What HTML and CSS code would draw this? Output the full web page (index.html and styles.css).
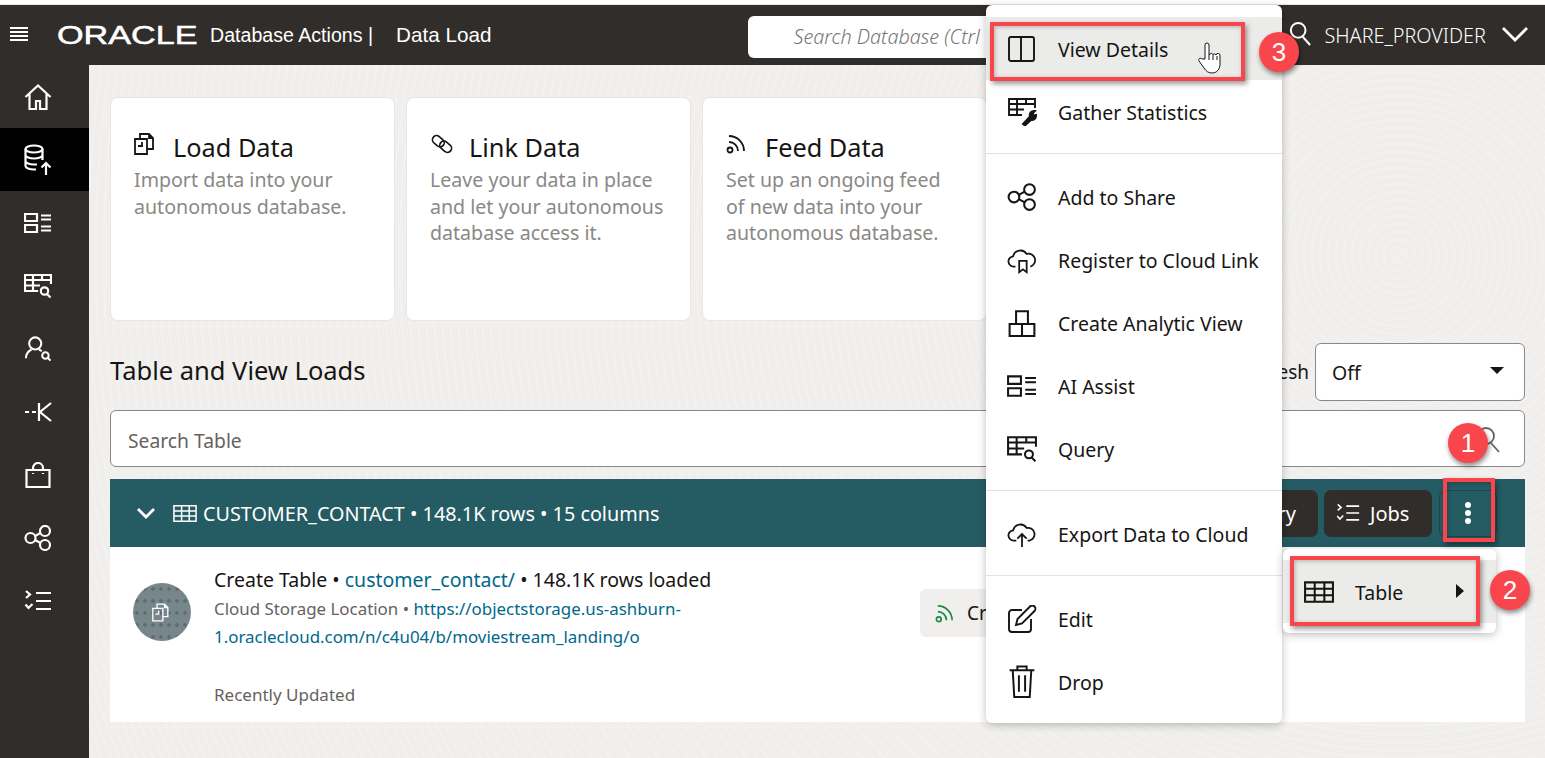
FILE: index.html
```html
<!DOCTYPE html>
<html>
	<head>
		<meta charset="utf-8">
		<title>Data Load</title>
		<link rel="stylesheet" href="styles.css">
	</head>
	<body>
	<svg class="defs" width="0" height="0">
		<symbol id="i-home" viewBox="0 0 28 28"><path d="M1.500 14 14 2.500 26.500 14M5.500 11v15h6.500v-8h4v8h6.500V11"/></symbol>
		<symbol id="i-dbup" viewBox="0 0 28 32"><ellipse cx="10" cy="5" rx="8.500" ry="3.500"/><path d="M1.500 5v17c0 2 4 3.500 8.500 3.500h2M18.500 5v11M1.500 11c0 2 4 3.500 8.500 3.500s8.500-1.500 8.500-3.500M1.500 17c0 2 4 3.500 8.500 3.500h3"/><path class="up" d="M22 31V19M17.500 23.500 22 19l4.500 4.500"/></symbol>
		<symbol id="i-cards" viewBox="0 0 28 20"><path d="M1 1h12v7H1zM1 12h12v7H1zM17 2.500h10M17 6.500h10M17 13.500h10M17 17.500h10"/></symbol>
		<symbol id="i-query" viewBox="0 0 28 24"><path d="M27 10V1H1v16h13M1 6h26M1 11.500h15M9 1v16M18 1v5"/><circle cx="20.500" cy="17" r="3.700"/><path d="m23 20 3.500 3.500"/></symbol>
		<symbol id="i-wrench" viewBox="0 0 28 28"><path d="M27 10V1H1v16h13M1 6h26M1 11.500h15M9 1v16M18 1v5"/><path class="solid" d="M15 26l7-7.500c-1-3 1-6 5-5.500l-2.500 2.500 1 2 2.500-.5c.5 3.500-2.500 5.500-5 5L17 27.500z"/></symbol>
		<symbol id="i-person" viewBox="0 0 28 28"><circle cx="11" cy="8" r="6.500"/><path d="M1 24c0-5 3-8 6-9.500M15 14.500c1 .5 2 1 3 2"/><circle cx="22" cy="21" r="3.500"/><path d="m24.500 23.500 3 3"/></symbol>
		<symbol id="i-data" viewBox="0 0 28 20"><path d="M1 10h4M8 10h4M15 1v18M27 1 16 10l11 9"/></symbol>
		<symbol id="i-bag" viewBox="0 0 26 26"><path d="M1.500 8h23v17h-23zM8 8V6a5 5 0 0 1 10 0v2M8 11v1M18 11v1"/></symbol>
		<symbol id="i-share" viewBox="0 0 28 26"><circle cx="6.500" cy="13" r="5"/><circle cx="21" cy="6" r="5"/><circle cx="21" cy="20" r="5"/><path d="m11 11 5.500-3M11 15l5.500 3"/></symbol>
		<symbol id="i-jobs" viewBox="0 0 28 22"><path d="m2 1 4 3.500L2 8M1.500 14.500 4.500 18l4-4M12 3h15M12 11h15M12 19h15"/></symbol>
		<symbol id="i-table" viewBox="0 0 28 20"><path d="M1 1h26v18H1zM1 7h26M1 13h26M10 1v18M19 1v18"/></symbol>
		<symbol id="i-panel" viewBox="0 0 28 28"><rect x="1" y="2" width="25" height="24" rx="2"/><path d="M13 2v24"/></symbol>
		<symbol id="i-cloudmark" viewBox="0 0 30 30"><path d="M8 22H6.500a5.500 5.500 0 0 1-1-11A8 8 0 0 1 20 8.500 6.500 6.500 0 0 1 24 22"/><path d="M12 16h8v12l-4-3-4 3z"/></symbol>
		<symbol id="i-cloudup" viewBox="0 0 30 30"><path d="M9 22H6.500a5.500 5.500 0 0 1-1-11A8 8 0 0 1 20 8.500 6.500 6.500 0 0 1 23 22h-2"/><path d="M15 29V15M10 20l5-5 5 5"/></symbol>
		<symbol id="i-blocks" viewBox="0 0 26 26"><path d="M1.500 14h23v11h-23zM13 14v11M7.500 2h11v12h-11z"/></symbol>
		<symbol id="i-edit" viewBox="0 0 28 28"><path d="M14 5H4a3 3 0 0 0-3 3v16a3 3 0 0 0 3 3h16a3 3 0 0 0 3-3V14"/><path d="M8 20l1.500-6L22 1.500a2.500 2.500 0 0 1 4.500 4.500L14 18.500z"/></symbol>
		<symbol id="i-trash" viewBox="0 0 26 32"><path d="M1 5h24M8.500 5V1.500h9V5M4 5l1.500 26h15L22 5M10 10v16M16 10v16"/></symbol>
		<symbol id="i-load" viewBox="0 0 24 22"><path d="M1 6h12v15H1zM6 6V1h9l4 4v11h-6M4 13h4V9M15 1v4h4"/></symbol>
		<symbol id="i-link" viewBox="0 0 24 24"><rect x="1" y="4.500" width="14" height="9" rx="4.500" transform="rotate(40 8 9)"/><rect x="9" y="10.500" width="14" height="9" rx="4.500" transform="rotate(40 16 15)"/></symbol>
		<symbol id="i-feed" viewBox="0 0 20 20"><circle cx="4" cy="16" r="2.500"/><path d="M3 8a9 9 0 0 1 9 9M3 2a15 15 0 0 1 15 15"/></symbol>
		<symbol id="i-search" viewBox="0 0 24 26"><circle cx="10" cy="9" r="8"/><path d="m15 16 8 9"/></symbol>
	</svg>

	<div class="strip"></div>
	<header class="topbar">
		<div class="burger"><i></i><i></i><i></i><i></i></div>
		<svg class="logo" width="141" height="26" viewBox="0 0 103 26" preserveAspectRatio="none"><text x="0" y="22">ORACLE</text></svg>
		<span class="app">Database Actions |</span>
		<span class="app page">Data Load</span>
		<div class="globalsearch">Search Database (Ctrl</div>
		<svg class="ico usericon"><use href="#i-search"/></svg>
		<span class="username">SHARE_PROVIDER</span>
		<svg class="userchev" width="26" height="16" viewBox="0 0 26 16"><path d="M1 2l12 12L25 2"/></svg>
	</header>

	<div class="main">
		<nav class="sidebar">
			<a><svg class="ico side-home"><use href="#i-home"/></svg></a>
			<a class="active"><svg class="ico side-db"><use href="#i-dbup"/></svg></a>
			<a><svg class="ico side-wide"><use href="#i-cards"/></svg></a>
			<a><svg class="ico side-wide"><use href="#i-query"/></svg></a>
			<a><svg class="ico side-wide"><use href="#i-person"/></svg></a>
			<a><svg class="ico side-wide"><use href="#i-data"/></svg></a>
			<a><svg class="ico side-bag"><use href="#i-bag"/></svg></a>
			<a><svg class="ico side-wide"><use href="#i-share"/></svg></a>
			<a><svg class="ico side-wide"><use href="#i-jobs"/></svg></a>
		</nav>

		<main class="content">
			<div class="cards">
				<div class="card">
					<div class="card-title"><svg class="ico card-ico"><use href="#i-load"/></svg>Load Data</div>
					<p>Import data into your<br>autonomous database.</p>
				</div>
				<div class="card">
					<div class="card-title"><svg class="ico card-ico"><use href="#i-link"/></svg>Link Data</div>
					<p>Leave your data in place<br>and let your autonomous<br>database access it.</p>
				</div>
				<div class="card">
					<div class="card-title"><svg class="ico card-ico feed"><use href="#i-feed"/></svg>Feed Data</div>
					<p>Set up an ongoing feed<br>of new data into your<br>autonomous database.</p>
				</div>
			</div>

			<div class="loads-head">
				<h2>Table and View Loads</h2>
				<span class="refresh-label">Auto Refresh</span>
				<div class="select">Off<b></b></div>
			</div>

			<div class="tablesearch">
				<span>Search Table</span>
				<svg class="ico"><use href="#i-search"/></svg>
			</div>

			<section class="load">
				<div class="load-head">
					<svg class="chev" width="20" height="12" viewBox="0 0 20 12"><path d="M2 2l8 8 8-8"/></svg>
					<svg class="ico load-table"><use href="#i-table"/></svg>
					<span class="load-name">CUSTOMER_CONTACT • 148.1K rows • 15 columns</span>
					<button class="dark query">Query</button>
					<button class="dark jobs"><svg class="ico"><use href="#i-jobs"/></svg>Jobs</button>
					<button class="kebab"><i></i><i></i><i></i></button>
				</div>
				<div class="load-body">
					<div class="avatar"><svg class="ico"><use href="#i-load"/></svg></div>
					<div class="load-text">
						<div class="line1">Create Table • <a>customer_contact/</a> • 148.1K rows loaded</div>
						<div class="line2">Cloud Storage Location • <a>https://objectstorage.us-ashburn-<br>1.oraclecloud.com/n/c4u04/b/moviestream_landing/o</a></div>
						<div class="line3">Recently Updated</div>
					</div>
					<div class="chip"><svg class="ico"><use href="#i-feed"/></svg>Create</div>
				</div>
			</section>
		</main>
	</div>

	<!-- popup menus and the numbered callouts sit over the page -->
	<div class="menu actions">
		<div class="item hover"><svg class="ico"><use href="#i-panel"/></svg>View Details</div>
		<div class="item"><svg class="ico"><use href="#i-wrench"/></svg>Gather Statistics</div>
		<hr>
		<div class="item"><svg class="ico"><use href="#i-share"/></svg>Add to Share</div>
		<div class="item"><svg class="ico"><use href="#i-cloudmark"/></svg>Register to Cloud Link</div>
		<div class="item"><svg class="ico"><use href="#i-blocks"/></svg>Create Analytic View</div>
		<div class="item"><svg class="ico"><use href="#i-cards"/></svg>AI Assist</div>
		<div class="item"><svg class="ico"><use href="#i-query"/></svg>Query</div>
		<hr>
		<div class="item"><svg class="ico"><use href="#i-cloudup"/></svg>Export Data to Cloud</div>
		<hr>
		<div class="item"><svg class="ico"><use href="#i-edit"/></svg>Edit</div>
		<div class="item"><svg class="ico tall"><use href="#i-trash"/></svg>Drop</div>
	</div>

	<div class="menu submenu">
		<div class="item hover"><svg class="ico"><use href="#i-table"/></svg>Table<b></b></div>
	</div>

	<div class="callout box-kebab"></div>
	<div class="callout box-table"></div>
	<div class="callout box-view"></div>
	<div class="badge badge1">1</div>
	<div class="badge badge2">2</div>
	<div class="badge badge3">3</div>

	<svg class="cursor" width="26" height="34" viewBox="0 0 26 34"><path d="M8 18V4a2 2 0 0 1 4 0v10l1-1a2 2 0 0 1 3 .5 2 2 0 0 1 3 .5 2 2 0 0 1 4 1v8c0 5-3 9-8 9-4 0-6-2-8-5l-5-7c-1-2 1-4 3-2z"/><path d="M12 14v5M16 14v5M20 15v4"/></svg>
	</body>
</html>
```

FILE: styles.css
```css
* {
	box-sizing: border-box;
}
html, body {
	height: 100%;
}
body {
	margin: 0;
	background: #fff;
	color: #161513;
	font-family: "Noto Sans", "Open Sans", sans-serif;
	overflow: hidden;
}
.defs {
	position: absolute;
}
.ico {
	fill: none;
	stroke: currentColor;
	stroke-width: 1.8;
	display: block;
	flex: none;
}
symbol .solid {
	fill: currentColor;
}
.strip {
	height: 5px;
	background: #fff;
	border-bottom: 1px solid #f6e6dc;
}

/* top bar */
.topbar {
	height: 60px;
	background: #312d2a;
	color: #fff;
	display: flex;
	align-items: center;
}
.burger {
	width: 18px;
	margin-left: 10px;
	margin-top: -1px;
}
.burger i {
	display: block;
	height: 2px;
	background: #fff;
	margin-bottom: 2px;
}
.logo {
	margin-left: 29px;
	margin-top: -1px;
	overflow: visible;
}
.logo text {
	font-family: "Liberation Sans", sans-serif;
	font-size: 25px;
	fill: #fff;
	stroke: #fff;
	stroke-width: .5;
}
.app {
	font-family: "Liberation Sans", sans-serif;
	font-size: 19.6px;
	margin-left: 12px;
}
.app.page {
	margin-left: 23px;
	font-size: 20.700px;
}
.globalsearch {
	width: 260px;
	height: 42px;
	margin-left: 256px;
	margin-top: 3px;
	background: #fff;
	border-radius: 6px;
	padding-left: 46px;
	line-height: 42px;
	color: #757575;
	font-size: 19.800px;
	font-style: italic;
	font-weight: 300;
	white-space: nowrap;
	overflow: hidden;
}
.usericon {
	width: 22px;
	height: 26px;
	margin-left: 281px;
	margin-top: -3px;
	stroke-width: 2.2;
}
.username {
	font-size: 19.800px;
	font-weight: 300;
	margin-left: 14px;
}
.userchev {
	margin-left: 16px;
	margin-top: -2px;
	fill: none;
	stroke: #fff;
	stroke-width: 2.8;
}

/* page */
.main {
	display: flex;
	height: 693px;
}
.sidebar {
	width: 89px;
	background: #312d2a;
	color: #fff;
	flex: none;
}
.sidebar a {
	display: flex;
	height: 63px;
	align-items: center;
	justify-content: center;
	padding-right: 14px;
}
.sidebar a.active {
	background: #000;
}
.sidebar .ico {
	stroke-width: 2.2;
}
.side-home { width: 28px; height: 28px; }
.side-db { width: 28px; height: 32px; }
.side-wide { width: 28px; height: 26px; }
.side-bag { width: 26px; height: 26px; }
.up {
	stroke: #fff;
}
.content {
	flex: 1;
	padding: 32px 20px 0 21px;
	background-color: #f0efed;
	background-image: repeating-radial-gradient(circle at 1310px 190px, rgba(255,255,255,0) 0 6px, rgba(255,255,255,.22) 7px 8px);
}
.cards {
	display: flex;
	gap: 11.500px;
}
.card {
	width: 284.500px;
	height: 224px;
	background: #fff;
	border: 1px solid #e8e6e3;
	border-radius: 8px;
	padding: 31px 23px;
}
.card-title {
	display: flex;
	align-items: center;
	font-size: 25.300px;
	height: 36px;
}
.card-ico {
	width: 24px;
	height: 22px;
	margin-right: 15px;
	margin-top: -6px;
}
.card-ico.feed {
	width: 20px;
	height: 20px;
	margin-right: 19px;
}
.card p {
	margin: 2px 0 0;
	color: #8a8886;
	font-size: 19.600px;
	line-height: 26.500px;
}
.loads-head {
	display: flex;
	align-items: center;
	height: 58px;
	margin-top: 22px;
}
.loads-head h2 {
	margin: -4px 0 0;
	flex: 1;
	font-size: 25.500px;
	font-weight: 400;
}
.refresh-label {
	font-size: 19px;
	margin-right: 6px;
}
.select {
	width: 210px;
	height: 58px;
	background: #fff;
	border: 1px solid #8a8886;
	border-radius: 6px;
	padding: 0 16px;
	font-size: 19.500px;
	line-height: 58px;
	position: relative;
}
.select b {
	position: absolute;
	right: 20px;
	top: 23px;
	border: 7px solid transparent;
	border-top: 7px solid #161513;
	border-bottom: 0;
}
.tablesearch {
	display: flex;
	align-items: center;
	justify-content: space-between;
	height: 57px;
	margin-top: 9px;
	background: #fff;
	border: 1px solid #8a8886;
	border-radius: 6px;
	padding: 3px 24px 0 17px;
	font-size: 19.300px;
	color: #66625e;
}
.tablesearch .ico {
	width: 24px;
	height: 26px;
}

/* load row */
.load {
	margin-top: 12px;
	background: #fff;
}
.load-head {
	display: flex;
	align-items: center;
	height: 68px;
	background: #255c63;
	color: #fff;
	font-size: 19.800px;
	padding-left: 26px;
}
.chev {
	fill: none;
	stroke: #fff;
	stroke-width: 2.800;
	margin-right: 17px;
}
.load-table {
	width: 24px;
	height: 17px;
	margin-right: 6px;
}
.load-name {
	flex: 1;
}
button {
	font-family: inherit;
	color: #fff;
	border: 0;
}
.dark {
	height: 47px;
	background: #312d2a;
	border-radius: 7px;
	font-size: 20px;
	display: flex;
	align-items: center;
	gap: 10px;
	padding: 0 20px;
}
.query {
	width: 120px;
	justify-content: flex-end;
	padding-right: 22px;
}
.jobs {
	width: 108px;
	margin-left: 6px;
	padding-left: 12px;
}
.jobs .ico {
	width: 24px;
	height: 20px;
}
.kebab {
	width: 58px;
	height: 47px;
	margin-left: 7px;
	margin-right: 28px;
	background: #255c63;
	border: 1px solid #1c474c;
	border-radius: 7px;
}
.kebab i {
	display: block;
	width: 6px;
	height: 6px;
	margin: 2px auto;
	background: #fff;
	border-radius: 50%;
}
.load-body {
	display: flex;
	height: 175px;
	padding: 20px 0 0 23px;
	position: relative;
}
.avatar {
	width: 58px;
	height: 58px;
	margin-top: 16px;
	border-radius: 50%;
	background-color: #76868a;
	background-image: radial-gradient(circle, #5d6d70 1.500px, rgba(0,0,0,0) 2px);
	background-size: 8px 12px;
	color: #fff;
	display: flex;
	align-items: center;
	justify-content: center;
}
.avatar .ico {
	width: 20px;
	height: 19px;
	stroke-width: 1.600;
}
.load-text {
	margin-left: 23px;
	width: 600px;
}
.line1 {
	font-size: 19.500px;
	line-height: 26px;
}
.line2 {
	font-size: 16.900px;
	line-height: 28px;
	margin-top: 2px;
	color: #66625e;
}
.line3 {
	font-size: 17px;
	margin-top: 32px;
	color: #66625e;
}
.load-text a {
	color: #00688c;
}
.chip {
	display: flex;
	align-items: center;
	position: absolute;
	left: 810px;
	top: 42px;
	width: 160px;
	height: 48px;
	padding-left: 15px;
	gap: 13px;
	background: #f1efed;
	border-radius: 6px;
	font-size: 19px;
}
.chip .ico {
	width: 19px;
	height: 19px;
	color: #1d8a3c;
}

/* menus */
.menu {
	position: absolute;
	background: #fff;
	border-radius: 6px;
	box-shadow: 0 2px 8px rgba(0,0,0,.25);
	font-size: 19.500px;
}
.actions {
	left: 986px;
	top: 5px;
	width: 296px;
	height: 718px;
	padding-top: 12px;
}
.item {
	display: flex;
	align-items: center;
	height: 63px;
	padding: 2px 0 0 21px;
	position: relative;
}
.item .ico {
	width: 30px;
	height: 28px;
	margin: 0 21px 2px 0;
	stroke-width: 1.900;
}
.item .ico.tall {
	height: 33px;
}
.item.hover {
	background: #ebebe9;
}
.menu hr {
	margin: 10px 0 11px;
	border: 0;
	border-top: 1px solid #e4e2df;
}
.submenu {
	left: 1283px;
	top: 549px;
	width: 213px;
	height: 84px;
	padding-top: 11px;
}
.submenu .ico {
	width: 30px;
	height: 22px;
}
.submenu b {
	position: absolute;
	right: 32px;
	top: 24px;
	border: 7px solid transparent;
	border-left: 8px solid #161513;
	border-right: 0;
}

/* callouts */
.callout {
	position: absolute;
	border: 4px solid #f9464c;
	box-shadow: 2px 3px 5px rgba(0,0,0,.4), inset 1px 1px 4px rgba(0,0,0,.25);
}
.box-view { left: 990px; top: 22px; width: 255px; height: 59px; }
.box-table { left: 1290px; top: 556px; width: 190px; height: 70px; }
.box-kebab { left: 1443px; top: 478px; width: 52px; height: 64px; }
.badge {
	position: absolute;
	width: 40px;
	height: 40px;
	border-radius: 50%;
	background: #f9464c;
	color: #fff;
	font-size: 26px;
	line-height: 40px;
	text-align: center;
	font-family: "Liberation Sans", sans-serif;
	box-shadow: 1px 3px 5px rgba(0,0,0,.45);
}
.badge1 { left: 1448px; top: 423px; }
.badge2 { left: 1490px; top: 570px; }
.badge3 { left: 1259px; top: 32px; }
.cursor {
	position: absolute;
	left: 1197px;
	top: 41px;
	fill: #fff;
	stroke: #161513;
	stroke-width: 1;
}
```
